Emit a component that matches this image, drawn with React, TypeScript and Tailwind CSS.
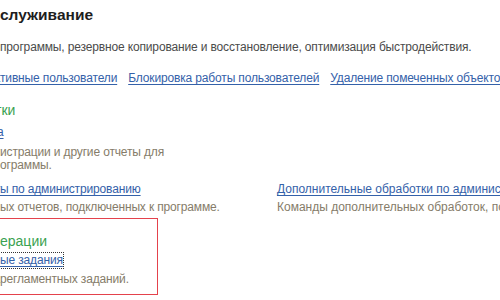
import React from 'react';

// One line of text that is cut at the left edge of the window:
// `pre` hangs out to the left of a zero-width box, `post` starts at x=0.
function Clip({ pre, post, className = '', inner = '' }: { pre: string; post: string; className?: string; inner?: string }) {
  return (
    <div className={`flex whitespace-nowrap ${className}`}>
      <div className="w-0 flex justify-end">
        <span className={inner}>{pre}</span>
      </div>
      <span className={inner}>{post}</span>
    </div>
  );
}

const link = 'text-[#3461a9] underline underline-offset-[2px] decoration-[#3461a9]';
const body = 'text-[12px] tracking-[-0.15px]';

export default function App() {
  return (
    <div className="w-[500px] h-[300px] overflow-hidden bg-white font-['Liberation_Sans',Arial,sans-serif]">
      {/* Title */}
      <Clip
        className="pt-[4px] text-[15.5px] leading-[22px] font-bold text-[#1e1e1e]"
        pre="Поддержка и об"
        post="служивание"
      />

      {/* Panel description */}
      <Clip
        className={`mt-[13px] ${body} leading-[16px] text-[#4b4b4b]`}
        pre="Мониторинг и управление работой "
        post="программы, резервное копирование и восстановление, оптимизация быстродействия."
      />

      {/* Top links */}
      <div className={`mt-[15px] flex gap-[11px] whitespace-nowrap ${body} leading-[16px]`}>
        <Clip inner={link} pre="Ак" post="тивные пользователи" />
        <a className={link}>Блокировка работы пользователей</a>
        <a className={link}>Удаление помеченных объектов</a>
      </div>

      {/* Отчеты и обработки */}
      <Clip
        className="mt-[14px] -ml-[5px] text-[14px] leading-[20px] text-[#3aa251]"
        pre="Отчеты и обрабо"
        post="тки"
      />
      <Clip
        className={`mt-[4px] -ml-[3px] ${body} leading-[16px]`}
        inner={link}
        pre="Отчеты администратор"
        post="а"
      />
      <div className={`mt-[6px] ${body} leading-[13px] text-[#857c69]`}>
        <Clip pre="Журнал рег" post="истрации и другие отчеты для" />
        <Clip pre="администрирования пр" post="ограммы." />
      </div>

      <div className={`mt-[9px] flex ${body} leading-[16px]`}>
        <div className="w-[277px] shrink-0">
          <Clip inner={link} pre="Дополнительные отчет" post="ы по администрированию" />
          <Clip className="mt-[2px] text-[#857c69]" pre="Команды дополнитель" post="ых отчетов, подключенных к программе." />
        </div>
        <div className="min-w-0 whitespace-nowrap tracking-normal">
          <a className={link}>Дополнительные обработки по администрированию</a>
          <div className="mt-[2px] text-[#857c69]">Команды дополнительных обработок, подключенных к программе.</div>
        </div>
      </div>

      {/* Регламентные операции (highlighted) */}
      <div className="mt-[3px] -ml-[20px] w-[178px] h-[77px] border border-[#e4424c] pl-[19px]">
        <Clip
          className="mt-[12px] text-[14px] leading-[20px] text-[#3aa251]"
          pre="Регламентные оп"
          post="ерации"
        />
        <div className="mt-[2px] flex">
          <div className="outline-1 outline-dotted outline-[#333]">
            <Clip inner={link} className={`${body} leading-[15px]`} pre="Регламентные и фонов" post="ые задания" />
          </div>
        </div>
        <Clip
          className={`mt-[3px] ${body} leading-[16px] text-[#857c69]`}
          pre="Настройка"
          post=" регламентных заданий."
        />
      </div>
    </div>
  );
}
